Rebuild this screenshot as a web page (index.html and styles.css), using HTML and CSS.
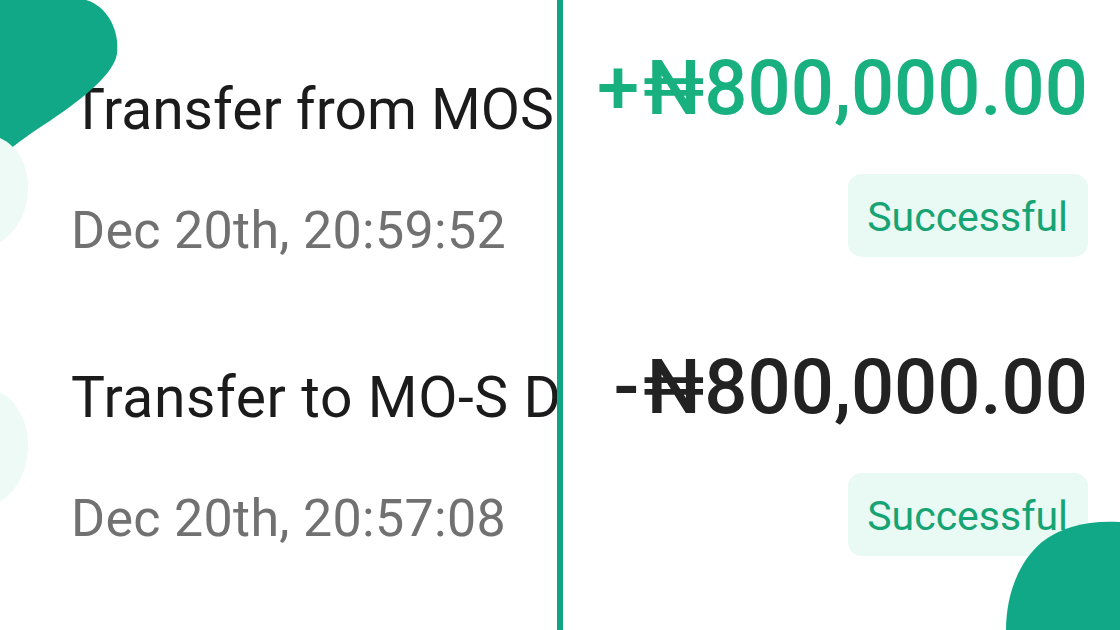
FILE: index.html
```html
<!DOCTYPE html>
<html lang="en">
<head>
<meta charset="utf-8">
<title>Transactions</title>
<link rel="stylesheet" href="styles.css">
</head>
<body>
<div class="page">
  <div class="col-left">
    <div class="tx">
      <div class="title">Transfer from MOS</div>
      <div class="date">Dec 20th, 20:59:52</div>
    </div>
    <div class="tx">
      <div class="title title-2">Transfer to MO-S D</div>
      <div class="date">Dec 20th, 20:57:08</div>
    </div>
  </div>
  <div class="divider"></div>
  <div class="col-right">
    <div class="tx-r">
      <div class="amount credit"><span class="sign">+</span>₦800,000.00</div>
      <div class="badge">Successful</div>
    </div>
    <div class="tx-r">
      <div class="amount debit"><span class="sign">-</span>₦800,000.00</div>
      <div class="badge">Successful</div>
    </div>
  </div>

  <svg class="blob blob-tl" width="130" height="170" viewBox="0 0 130 170">
    <path d="M0,0 L86,0 C107,6 120,30 117,54 C113,78 70,108 36,130 C20,141 8,150 0,158 Z" fill="#10a886"/>
  </svg>
  <svg class="blob blob-l1" width="40" height="110" viewBox="0 0 40 110">
    <path d="M0,0 C18,8 29,28 28,52 C27,76 16,94 0,104 Z" fill="#eefaf6"/>
  </svg>
  <svg class="blob blob-l2" width="40" height="120" viewBox="0 0 40 120">
    <path d="M0,0 C18,10 29,32 28,56 C27,80 16,100 0,110 Z" fill="#eefaf6"/>
  </svg>
  <svg class="blob blob-br" width="116" height="110" viewBox="0 0 116 110">
    <path d="M116,2 C86,0 58,6 38,22 C14,42 2,76 2,110 L116,110 Z" fill="#10a886"/>
  </svg>
</div>
</body>
</html>
```

FILE: styles.css
```css
html, body {
  margin: 0;
  padding: 0;
  background: #ffffff;
}

.page {
  position: relative;
  width: 1120px;
  height: 630px;
  overflow: hidden;
  display: flex;
  font-family: Roboto, "Noto Sans", "DejaVu Sans", sans-serif;
  background: #ffffff;
}

.col-left {
  width: 557px;
  flex: none;
  overflow: hidden;
  white-space: nowrap;
  box-sizing: border-box;
  padding: 74px 0 0 71px;
  display: flex;
  flex-direction: column;
  gap: 99px;
}

.tx {
  display: flex;
  flex-direction: column;
  gap: 53px;
}

.title {
  font-size: 57px;
  line-height: 72px;
  color: #1b1b1b;
  font-weight: 400;
}

.title-2 {
  letter-spacing: 0.6px;
}

.date {
  font-size: 52px;
  line-height: 64px;
  color: #717171;
  font-weight: 400;
  letter-spacing: 0.3px;
}

.divider {
  width: 6px;
  flex: none;
  background: #12a584;
}

.col-right {
  flex: 1;
  box-sizing: border-box;
  padding: 44px 32px 0 0;
  display: flex;
  flex-direction: column;
  align-items: flex-end;
  gap: 86px;
}

.tx-r {
  display: flex;
  flex-direction: column;
  align-items: flex-end;
  gap: 42px;
}

.amount {
  font-size: 76px;
  line-height: 88px;
  font-weight: 500;
  white-space: nowrap;
}

.sign {
  margin-right: 4px;
}

.credit {
  color: #18b07e;
}

.debit {
  color: #222222;
}

.badge {
  background: #e9f9f3;
  border-radius: 14px;
  padding: 19px 20px 16px 19px;
  font-size: 41px;
  line-height: 48px;
  color: #17a474;
}

.blob {
  position: absolute;
  display: block;
}

.blob-tl {
  left: 0;
  top: 0;
}

.blob-l1 {
  left: 0;
  top: 138px;
}

.blob-l2 {
  left: 0;
  top: 392px;
}

.blob-br {
  right: 0;
  bottom: 0;
}
```
